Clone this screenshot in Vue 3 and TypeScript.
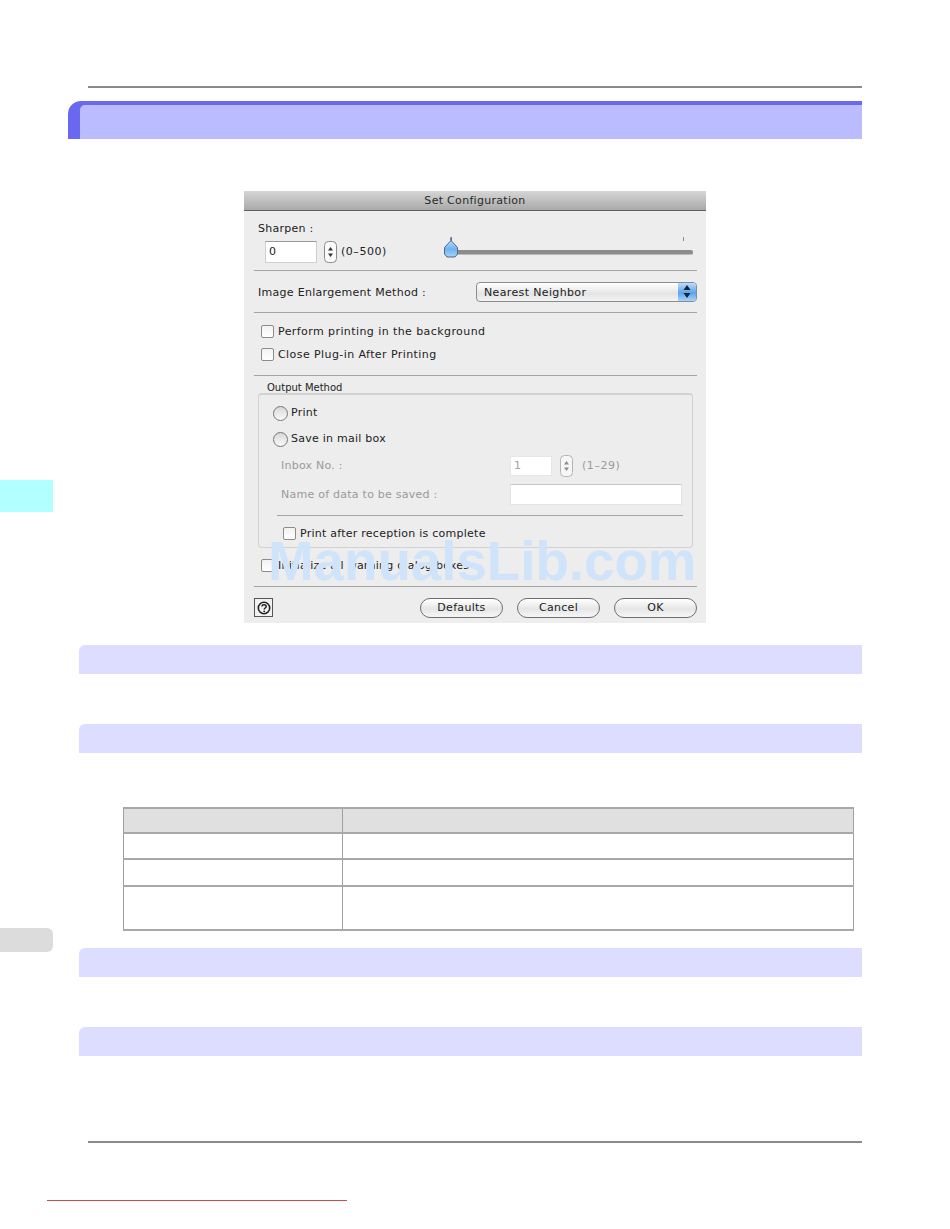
<script setup lang="ts">
const rows = [
  { cls: 'head', h: 27 },
  { cls: '', h: 26 },
  { cls: '', h: 27 },
  { cls: '', h: 44 },
]
</script>

<template>
  <div class="page">
    <div class="tab tab-cyan"></div>
    <div class="tab tab-gray"></div>

    <div class="rule rule-top"></div>
    <div class="title-band"><div class="title-inner"></div></div>

    <div class="dialog">
      <div class="dlg-title">Set Configuration</div>
      <div class="dlg-body">
        <div class="sharpen">
          <div class="lbl sharpen-lbl">Sharpen :</div>
          <div class="sharpen-row">
            <div class="input in-sharpen">0</div>
            <svg class="stepper" width="13" height="22" viewBox="0 0 13 22">
              <rect x=".5" y=".5" width="12" height="21" rx="4" fill="#fafafa" stroke="#8a8a8a" />
              <path d="M6.5 6 9 9.5H4zM6.5 16 4 12.5h5z" fill="#333" />
            </svg>
            <span class="lbl range">(0–500)</span>
            <div class="slider">
              <span class="tick tick-a"></span>
              <span class="tick tick-b"></span>
              <div class="track"></div>
              <svg class="thumb" width="17" height="21" viewBox="0 0 17 21">
                <defs>
                  <linearGradient id="th" x1="0" y1="0" x2="0" y2="1">
                    <stop offset="0" stop-color="#d6eafb" />
                    <stop offset=".6" stop-color="#6fb2ee" />
                    <stop offset="1" stop-color="#a6d4f8" />
                  </linearGradient>
                </defs>
                <path d="M8 .5V3.500L14.500 10.500V17L12 20H4L1.500 17V10.500L8 3.500z" fill="url(#th)" stroke="#4a6a8c" stroke-linejoin="round" />
              </svg>
            </div>
          </div>
        </div>
        <div class="sep"></div>

        <div class="enlarge">
          <span class="lbl enlarge-lbl">Image Enlargement Method :</span>
          <div class="select">
            <span class="select-text">Nearest Neighbor</span>
            <span class="select-btn">
              <svg width="8" height="13" viewBox="0 0 8 13"><path d="M4 0 7.500 5H.5zM4 13 .5 8h7z" fill="#10243c" /></svg>
            </span>
          </div>
        </div>
        <div class="sep"></div>

        <div class="check-row cr-1"><span class="check"></span><span class="lbl wide">Perform printing in the background</span></div>
        <div class="check-row cr-2"><span class="check"></span><span class="lbl wide">Close Plug-in After Printing</span></div>
        <div class="sep"></div>

        <div class="legend">Output Method</div>
        <div class="group">
          <div class="radio-row rr-1"><span class="radio"></span><span class="lbl">Print</span></div>
          <div class="radio-row rr-2"><span class="radio"></span><span class="lbl">Save in mail box</span></div>
          <div class="field-row fr-1">
            <span class="lbl dim field-lbl">Inbox No. :</span>
            <div class="input in-inbox">1</div>
            <svg class="stepper-dim" width="13" height="22" viewBox="0 0 13 22">
              <rect x=".5" y=".5" width="12" height="21" rx="4" fill="#f6f6f6" stroke="#b4b4b4" />
              <path d="M6.500 6 9 9.500H4zM6.500 16 4 12.500h5z" fill="#8a8a8a" />
            </svg>
            <span class="lbl dim range-2">(1–29)</span>
          </div>
          <div class="field-row fr-2">
            <span class="lbl dim field-lbl">Name of data to be saved :</span>
            <div class="input in-name"></div>
          </div>
          <div class="sep sep-in"></div>
          <div class="check-row cr-in"><span class="check"></span><span class="lbl">Print after reception is complete</span></div>
        </div>

        <div class="check-row cr-3"><span class="check"></span><span class="lbl">Initialize all warning dialog boxes</span></div>
        <div class="sep"></div>

        <div class="footer">
          <div class="help">
            <svg width="14" height="14" viewBox="0 0 14 14">
              <circle cx="7" cy="7" r="5.700" fill="none" stroke="#222" stroke-width="1.600" />
              <path d="M4.900 5.500C5 4.200 6 3.700 7 3.700c1.300 0 2.200.8 2.200 1.800 0 1.500-2 1.500-2 3" fill="none" stroke="#222" stroke-width="1.500" />
              <circle cx="7.200" cy="10.300" r=".9" fill="#222" />
            </svg>
          </div>
          <div class="btns">
            <div class="btn">Defaults</div>
            <div class="btn">Cancel</div>
            <div class="btn">OK</div>
          </div>
        </div>
      </div>
    </div>
    <div class="watermark">ManualsLib.com</div>

    <div class="band band-1"></div>
    <div class="band band-2"></div>

    <div class="table">
      <div v-for="(r, i) in rows" :key="i" class="tr" :class="r.cls" :style="{ height: r.h + 'px' }">
        <div class="td c1"></div>
        <div class="td c2"></div>
      </div>
    </div>

    <div class="band band-3"></div>
    <div class="band band-4"></div>

    <div class="rule rule-bottom"></div>
    <div class="red-line"></div>
  </div>
</template>

<style>
html, body { margin: 0; background: #fff; }
</style>

<style scoped>
.page {
  position: relative;
  width: 950px;
  height: 1229px;
  overflow: hidden;
  background: #fff;
  display: flow-root;
  font-family: "DejaVu Sans", sans-serif;
}
.tab { position: absolute; left: 0; width: 53px; }
.tab-cyan { top: 480px; height: 32px; background: #b2ffff; }
.tab-gray { top: 928px; height: 24px; background: #dcdcdc; border-radius: 0 6px 6px 0; }

.rule { height: 2px; background: #8a8a8a; margin-left: 88px; width: 774px; }
.rule-top { margin-top: 86px; }
.rule-bottom { margin-top: 85px; }
.title-band {
  margin: 13px 0 0 68px;
  width: 794px;
  height: 38px;
  box-sizing: border-box;
  padding: 4px 0 0 12px;
  background: #6868f0;
  border-radius: 13px 0 0 0;
}
.title-inner { height: 34px; background: #bbbcff; border-radius: 5px 0 0 0; }

.dialog {
  margin: 52px 0 0 244px;
  width: 462px;
  height: 432px;
  background: #ededed;
  display: flex;
  flex-direction: column;
  color: #222;
}
.dlg-title {
  height: 20px;
  line-height: 19px;
  text-align: center;
  font-size: 11px;
  letter-spacing: .3px;
  color: #2a2a2a;
  background: linear-gradient(#d6d6d6, #a9a9a9);
  border-bottom: 1px solid #5f5f5f;
  box-sizing: border-box;
}
.dlg-body { position: relative; padding: 0 9px 0 10px; flex: 1; }
.lbl { font-size: 11px; line-height: 14px; white-space: nowrap; letter-spacing: .25px; }
.wide { letter-spacing: .42px; }
.dim { color: #9a9a9a; }
.sharpen { height: 59px; box-sizing: border-box; padding: 11px 0 0 4px; }
.sharpen-lbl { height: 18px; }
.sharpen-row { display: flex; align-items: center; height: 24px; padding-left: 7px; }
.input {
  background: #fff;
  box-sizing: border-box;
  font-size: 11px;
  line-height: 20px;
  padding-left: 3px;
  border: 1px solid #cfcfcf;
  border-top-color: #9a9a9a;
}
.in-sharpen { width: 52px; height: 22px; }
.stepper { margin-left: 7px; }
.range { margin-left: 4px; letter-spacing: .53px; }
.slider { position: relative; width: 250px; height: 24px; margin-left: 56px; }
.track {
  position: absolute; left: 2px; right: 0; top: 10px; height: 4px;
  background: #8c8c8c; border-radius: 2px; border-bottom: 1px solid #bbb;
}
.tick { position: absolute; top: -3px; width: 1px; height: 4px; background: #8a8a8a; }
.tick-a { left: 8px; }
.tick-b { left: 240px; }
.thumb { position: absolute; left: 0; top: -3px; }
.sep { height: 1px; background: #a5a5a5; }
.enlarge { height: 41px; display: flex; align-items: center; justify-content: space-between; padding-left: 4px; box-sizing: border-box; }
.enlarge-lbl { margin-top: 2px; letter-spacing: .29px; }
.select {
  width: 221px; height: 20px; box-sizing: border-box;
  border: 1px solid #8c8c8c; border-radius: 4px;
  background: linear-gradient(#ffffff, #e4e4e4 60%, #f4f4f4);
  display: flex; align-items: center; justify-content: space-between;
  overflow: hidden;
}
.select-text { font-size: 11px; padding: 1px 0 0 7px; letter-spacing: .36px; color: #222; }
.select-btn {
  width: 18px; height: 100%;
  background: linear-gradient(#bcdcf8, #5ba4ea 55%, #a6d4fa);
  display: flex; align-items: center; justify-content: center;
}
.check-row { display: flex; align-items: center; }
.check {
  width: 11px; height: 11px; margin-right: 4px;
  background: linear-gradient(#f2f2f2, #fff);
  border: 1px solid #8c8c8c; border-radius: 2px; flex: none;
}
.cr-1 { height: 23px; margin-top: 7px; padding-left: 7px; }
.cr-2 { height: 23px; padding-left: 7px; margin-bottom: 9px; }
.legend { font-size: 10px; line-height: 12px; height: 11px; margin: 6px 0 0 13px; color: #222; }
.group {
  margin: 0 4px 0 4px;
  height: 155px;
  box-sizing: border-box;
  border: 1px solid #d2d2d2;
  border-top: 2px solid #d2d2d2;
  border-radius: 4px;
  padding: 0 9px 0 18px;
}
.radio-row { display: flex; align-items: center; margin-left: -4px; }
.radio {
  width: 13px; height: 13px; border-radius: 50%; margin-right: 3px;
  border: 1px solid #777; background: linear-gradient(#d8d8d8, #fafafa); flex: none;
}
.rr-1 { height: 26px; margin-top: 5px; }
.rr-2 { height: 26px; }
.field-row { display: flex; align-items: center; height: 29px; position: relative; }
.field-lbl { width: 229px; flex: none; margin-left: 4px; }
.fr-1 { height: 28px; }
.in-inbox { width: 42px; height: 20px; color: #a0a0a0; border-color: #e6e6e6; line-height: 18px; }
.stepper-dim { margin-left: 8px; }
.range-2 { margin-left: 9px; letter-spacing: .55px; }
.in-name { width: 172px; height: 21px; border-color: #e4e4e4; border-top-color: #c4c4c4; }
.sep-in { margin: 6px 0 0 0; width: 406px; }
.cr-in { height: 17px; margin-top: 9px; padding-left: 6px; }
.cr-3 { height: 17px; margin-top: 9px; padding-left: 7px; margin-bottom: 12px; }
.footer {
  display: flex; align-items: flex-start; justify-content: space-between;
  height: 36px; box-sizing: border-box; padding-top: 11px;
}
.help {
  width: 19px; height: 19px; box-sizing: border-box; background: #f2f2f2;
  border: 1px solid #555; display: flex; align-items: center; justify-content: center;
}
.btns { display: flex; gap: 14px; }
.btn {
  width: 83px; height: 20px; box-sizing: border-box;
  border: 1px solid #6e6e6e; border-radius: 10px;
  background: linear-gradient(#ffffff, #e6e6e6 55%, #f6f6f6);
  text-align: center; font-size: 11px; line-height: 18px; letter-spacing: .3px; color: #222;
}
.watermark {
  position: absolute;
  left: 268px;
  top: 530px;
  font-family: "Liberation Sans", sans-serif;
  font-weight: 700;
  font-size: 54.7px;
  line-height: 62px;
  color: #cfe3fb;
  white-space: nowrap;
}
.band { margin-left: 79px; width: 783px; height: 29px; background: #ddddff; border-radius: 6px 0 0 0; }
.band-1 { margin-top: 22px; }
.band-2 { margin-top: 50px; }
.band-3 { margin-top: 17px; }
.band-4 { margin-top: 50px; }
.table { margin: 54px 0 0 123px; width: 731px; }
.tr {
  display: flex; box-sizing: border-box;
  border-bottom: 2px solid #a8a8a8;
}
.tr:first-child { border-top: 2px solid #a8a8a8; }
.tr.head { background: #e0e0e0; }
.td { box-sizing: border-box; border-left: 1px solid #a0a0a0; }
.c1 { width: 219px; }
.c2 { flex: 1; border-right: 1px solid #a0a0a0; }
.red-line { margin: 57px 0 0 47px; width: 300px; height: 1px; background: #cf4a4a; }
</style>
